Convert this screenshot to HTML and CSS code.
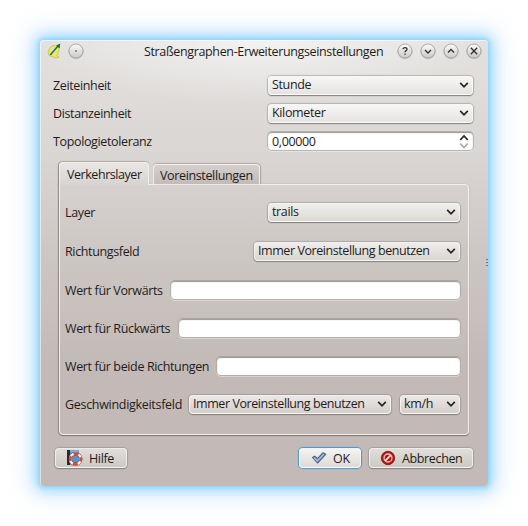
FILE: index.html
```html
<!DOCTYPE html>
<html lang="de">
<head>
<meta charset="utf-8">
<title>Straßengraphen-Erweiterungseinstellungen</title>
<link rel="stylesheet" href="styles.css">
</head>
<body>
<svg class="defs" width="0" height="0">
  <defs>
    <linearGradient id="orb" x1="0" y1="0" x2="0" y2="1"><stop offset="0" stop-color="#fcfcfc"/><stop offset="1" stop-color="#cbc8c5"/></linearGradient>
    <symbol id="arrow" viewBox="0 0 10 8"><path d="M1.2 1.8 5 5.8 8.8 1.8" fill="none" stroke="#252423" stroke-width="1.7"/></symbol>
    <symbol id="round" viewBox="0 0 18 18"><circle cx="9" cy="9.5" r="7.6" fill="#aaa7a5" opacity=".65"/><circle cx="9" cy="9" r="7" fill="url(#orb)" stroke="#a09d9b" stroke-width=".8"/></symbol>
  </defs>
</svg>
<main class="dialog">
  <header class="titlebar">
    <svg class="app" viewBox="0 0 14 16"><path d="M8.500 2.500C4.500 2 1 6 1.200 9.800c.1 3 2.300 4.200 4.500 3.600l1.200 1.400c1.500.6 4 .2 5.100-1-1 .3-2-.2-2.400-1C12 10 12.600 6 11.500 4" fill="#e6ea62" stroke="#b5bd4a" stroke-width=".7"/><path d="M7.700 4.600C5.500 4.600 3.800 7.600 4 9.900c.2 1.900 2 2 3.100.6C8.600 9 9.400 6.300 8.800 5.200" fill="#dfe0d6"/><path d="M3.200 12 11 3" stroke="#2f6a35" stroke-width="1.500"/><path d="m9 2.700 4.200-2.100-.5 4.600z" fill="#16702a"/></svg>
    <svg class="orb menu" viewBox="0 0 18 18"><use href="#round"/><circle cx="9" cy="9" r=".8" fill="#333"/></svg>
    <h1 class="title">Straßengraphen-Erweiterungseinstellungen</h1>
    <div class="controls">
      <svg class="orb" viewBox="0 0 18 18"><use href="#round"/><path d="M7 7.200C7 5 11 5 11 7.200 11 8.700 9 8.600 9 10.200M9 11.600v1.200" fill="none" stroke="#333" stroke-width="1.300"/></svg>
      <svg class="orb" viewBox="0 0 18 18"><use href="#round"/><path d="m6 8 3 3 3-3" fill="none" stroke="#333" stroke-width="1.400"/></svg>
      <svg class="orb" viewBox="0 0 18 18"><use href="#round"/><path d="m6 10.500 3-3 3 3" fill="none" stroke="#333" stroke-width="1.400"/></svg>
      <svg class="orb" viewBox="0 0 18 18"><use href="#round"/><path d="m5.800 5.800 6.400 6.400m0-6.400-6.400 6.400" fill="none" stroke="#333" stroke-width="1.400"/></svg>
    </div>
  </header>
  <section class="settings">
    <div class="row"><span class="label">Zeiteinheit</span><div class="combo wide"><span>Stunde</span><svg class="arrow"><use href="#arrow"/></svg></div></div>
    <div class="row"><span class="label">Distanzeinheit</span><div class="combo wide"><span>Kilometer</span><svg class="arrow"><use href="#arrow"/></svg></div></div>
    <div class="row"><span class="label">Topologietoleranz</span><div class="field spin"><span>0,00000</span><svg class="steps" viewBox="0 0 10 15"><path d="M1.200 6 5 2 8.800 6" fill="none" stroke="#252423" stroke-width="1.700"/><path d="M1.200 9.500 5 13.500 8.800 9.500" fill="none" stroke="#aaa" stroke-width="1.700"/></svg></div></div>
  </section>
  <nav class="tabs">
    <div class="tab active">Verkehrslayer</div>
    <div class="tab">Voreinstellungen</div>
  </nav>
  <section class="pane">
    <div class="row"><span class="label">Layer</span><div class="combo layer"><span>trails</span><svg class="arrow"><use href="#arrow"/></svg></div></div>
    <div class="row"><span class="label">Richtungsfeld</span><div class="combo direction"><span>Immer Voreinstellung benutzen</span><svg class="arrow"><use href="#arrow"/></svg></div></div>
    <div class="row"><span class="label">Wert für Vorwärts</span><div class="field forward"></div></div>
    <div class="row"><span class="label">Wert für Rückwärts</span><div class="field backward"></div></div>
    <div class="row"><span class="label">Wert für beide Richtungen</span><div class="field both"></div></div>
    <div class="row"><span class="label loose">Geschwindigkeitsfeld</span><div class="pair"><div class="combo speed"><span>Immer Voreinstellung benutzen</span><svg class="arrow"><use href="#arrow"/></svg></div><div class="combo unit"><span>km/h</span><svg class="arrow"><use href="#arrow"/></svg></div></div></div>
  </section>
  <footer class="actions">
    <div class="button help"><svg class="icon" viewBox="0 0 16 16"><path d="M0 0h12v15H0z" fill="#5b9bd5"/><path d="M0 0h3v15H0z" fill="#252b35"/><path d="M3 1h9" stroke="#8dbbe0"/><circle cx="8.500" cy="9" r="5.300" fill="#5795c9" stroke="#8f322b" stroke-width="3.400"/><circle cx="8.500" cy="9" r="5.300" fill="none" stroke="#f4f1ee" stroke-width="2.600"/><circle cx="8.500" cy="9" r="5.300" fill="none" stroke="#dc4938" stroke-width="2.600" stroke-dasharray="5 3.325" stroke-dashoffset="2.500"/></svg><span>Hilfe</span></div>
    <div class="button ok"><svg class="icon" viewBox="0 0 16 16"><path d="m1.500 7.500 2.300-1.400 2.700 2.500L12 2.700l2.700 1.600L6.500 13Z" fill="#8ba8c9" stroke="#4b6583" stroke-width="1.100" stroke-linejoin="round"/><path d="m3 8 3.500 3L12.500 4.500" fill="none" stroke="#b5c9de" stroke-width=".8"/></svg><span>OK</span></div>
    <div class="button cancel"><svg class="icon" viewBox="0 0 16 16"><circle cx="8" cy="8" r="6.700" fill="#b51614" stroke="#7b1513" stroke-width=".8"/><circle cx="8" cy="8" r="4" fill="#b51614" stroke="#e9c5c2" stroke-width="1.300"/><path d="m5.200 10.800 5.600-5.600" stroke="#eee1df" stroke-width="1.700"/></svg><span>Abbrechen</span></div>
  </footer>
  <div class="grip"></div>
</main>
</body>
</html>
```
FILE: styles.css
```css
* { box-sizing: border-box; }
body { margin: 0; padding: 40px; background: #fff; overflow: hidden; font: 12.5px/18px "Open Sans", "Noto Sans", sans-serif; letter-spacing: -.36px; color: #1f1c1b; white-space: nowrap; }
.defs { position: absolute; }
svg { flex: none; }
.dialog { position: relative; width: 448px; height: 446px; border-radius: 4px; padding: 0 15px 0 13px;
  background: radial-gradient(ellipse 230px 64px at 50% 0, rgba(255,255,255,.6), transparent), linear-gradient(#e3e1df 0, #dad6d3 110px, #cbc5c2 230px, #c3bab7 325px);
  box-shadow: inset 1px 1px 0 rgba(255,255,255,.55), 0 0 4px 1px #84d2fb, 0 0 13px 4px rgba(140,212,255,.85), 0 0 26px 10px rgba(175,210,255,.4); }
.titlebar { display: flex; height: 32px; padding-bottom: 10px; align-items: center; margin: 0 -9.5px 0 -6px; }
.app { width: 14px; height: 16px; }
.orb { width: 18px; height: 18px; display: block; }
.menu { margin-left: 6px; }
.title { flex: 1; min-width: 0; margin: 1px 0 0; padding-left: 59px; font: inherit; }
.controls { display: flex; gap: 5px; }
.row { display: flex; justify-content: space-between; align-items: center; height: 28px; }
.label { padding-top: 2px; }
.loose { letter-spacing: -.3px; }
.settings { margin-top: -1px; height: 91px; }
.combo { display: flex; justify-content: space-between; align-items: center; height: 19px; padding: 0 3px 1px 3px; border-radius: 4px; border: 1px solid rgba(255,255,255,.65); background: linear-gradient(rgba(255,255,255,.66), rgba(231,231,223,.48)); box-shadow: 0 1px 1px #858280, 0 0 1px 1px rgba(125,121,118,.42); }
.settings .combo { background: linear-gradient(#f7f6f5, #e6e4e2); }
.arrow { width: 10px; height: 8px; }
.wide, .spin { width: 205px; }
.field { height: 18px; border-radius: 4px; background: #fff; box-shadow: inset 0 1px 1px #999592, 0 0 0 1px rgba(140,135,132,.5), 0 1px 0 1px rgba(255,255,255,.35); }
.spin { display: flex; align-items: center; justify-content: space-between; padding: 1px 4px 0 4px; }
.steps { width: 10px; height: 15px; }
.tabs { display: flex; align-items: flex-end; height: 22px; padding-left: 6px; gap: 4px; }
.tab { width: 107px; height: 20px; border-radius: 4px 4px 0 0; padding: 2px 6px; border: 1px solid #f2f0ef; border-bottom: 0; background: linear-gradient(#d5d0ce, #c2bbb8); box-shadow: 0 -1px 1px rgba(110,105,102,.35), 1px 0 1px rgba(100,96,93,.4); }
.tab.active { width: 90px; height: 23px; margin-bottom: -1px; position: relative; background: linear-gradient(#e8e6e4, #d7d3d0); padding: 3px 7px; letter-spacing: -.45px; box-shadow: -1px 0 1px #8b8784, 0 -1px 1px rgba(110,105,102,.35); clip-path: inset(-2px -2px 0 -2px); }
.pane { margin-left: 6px; width: 410px; height: 251px; border: 1px solid #f2f0ef; border-radius: 0 4px 4px 4px; padding: 13px 8px 0 5px; box-shadow: -1px 0 1px #8b8784, 0 1px 1px #77736f; }
.pane .row { height: 38px; }
.pane .row:first-child { height: 28px; margin-bottom: 6px; }
.pane .row:nth-child(2) { margin-bottom: 1px; }
.pane .combo, .pane .field { flex: none; }
.direction, .speed { letter-spacing: -.43px; }
.layer { width: 192px; }
.direction { width: 206px; }
.forward { width: 289px; }
.backward { width: 281px; }
.both { width: 243px; }
.pair { display: flex; gap: 9px; }
.speed { width: 202px; }
.unit { width: 60px; }
.actions { display: flex; align-items: center; margin: 13px 0 0 2px; }
.button { height: 20px; display: flex; align-items: center; border: 1px solid rgba(255,255,255,.65); border-radius: 4px; background: linear-gradient(rgba(255,255,255,.5), rgba(215,217,206,.5)); box-shadow: 0 1px 1px #858280, 0 0 1px 1px rgba(125,121,118,.42); }
.button span { padding-top: 1px; }
.icon { width: 16px; height: 16px; }
.help { width: 72px; padding-left: 11px; gap: 6px; }
.ok { width: 62px; margin-left: auto; padding-left: 11px; gap: 6px; background: linear-gradient(#f5f4f3, #dddad7); box-shadow: 0 0 1px 1px #3e9bd0; letter-spacing: -.1px; }
.cancel { width: 104px; margin-left: 8px; padding-left: 10px; gap: 6px; }
.grip { position: absolute; right: 0; top: 219px; width: 2px; height: 9px; background: repeating-linear-gradient(#77736f 0 1px, transparent 1px 3px); }
```
